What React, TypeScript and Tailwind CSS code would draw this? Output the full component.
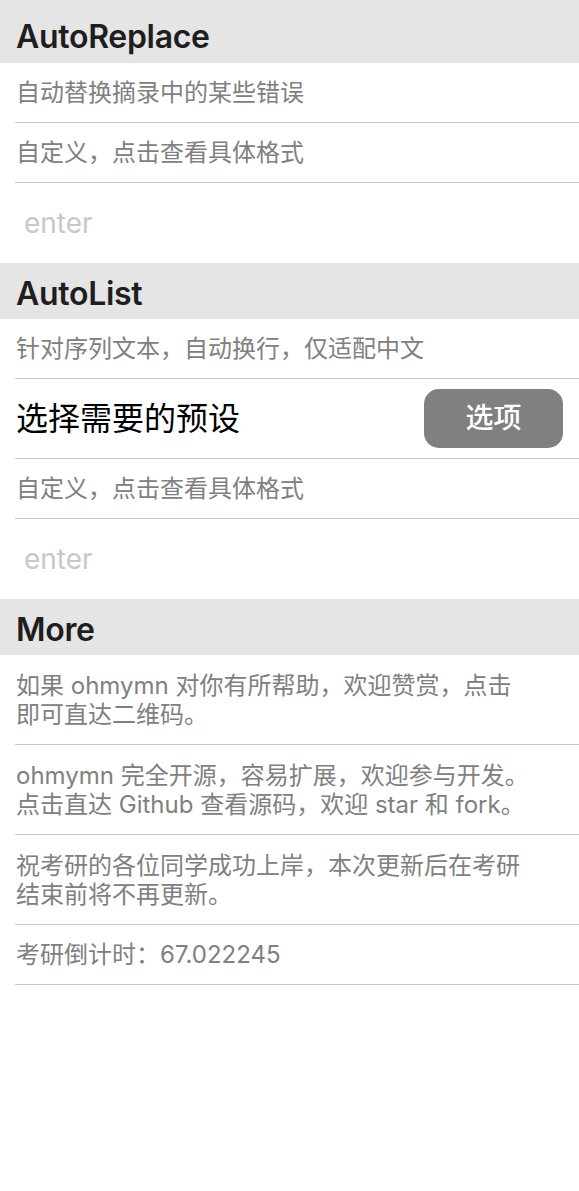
const font = "font-['Inter','Noto_Sans_CJK_SC',sans-serif]";

function Header({ title, first }: { title: string; first?: boolean }) {
  return (
    <div className={`bg-[#e5e5e5] pl-4 flex items-end ${first ? "h-[63px] pb-[10px]" : "h-[56px] pb-[9px]"}`}>
      <span className="text-[32px] font-semibold text-[#1e1e1e] leading-none tracking-[-0.3px]">{title}</span>
    </div>
  );
}

function TextRow({ children, tall }: { children: React.ReactNode; tall?: boolean }) {
  return (
    <div className="pl-[15px]">
      <div
        className={`border-b border-[#c8c8c8] pl-px pr-4 flex items-center text-[24px] leading-[29px] text-[#808080] ${tall ? "h-[90px]" : "h-[60px]"}`}
      >
        <p>{children}</p>
      </div>
    </div>
  );
}

function EnterRow() {
  return (
    <div className="h-[80px] flex items-center pl-6">
      <input
        placeholder="enter"
        className="w-full text-[28px] outline-none placeholder:text-[#c7c7cc] bg-transparent"
      />
    </div>
  );
}

export default function App() {
  return (
    <div className={`w-[579px] h-[1191px] bg-white ${font}`}>
      <Header title="AutoReplace" first />
      <TextRow>自动替换摘录中的某些错误</TextRow>
      <TextRow>自定义，点击查看具体格式</TextRow>
      <EnterRow />

      <Header title="AutoList" />
      <div className="pl-[15px]">
        <div className="border-b border-[#c8c8c8] h-[60px] flex items-center pl-px text-[24px] text-[#808080]">
          针对序列文本，自动换行，仅适配中文
        </div>
      </div>
      <div className="pl-[15px]">
        <div className="border-b border-[#c8c8c8] h-[80px] flex items-center justify-between pl-px pr-4">
          <span className="text-[32px] text-black">选择需要的预设</span>
          <button className="w-[139px] h-[59px] rounded-[15px] bg-[#808080] text-white text-[28px] font-medium mb-px">
            选项
          </button>
        </div>
      </div>
      <TextRow>自定义，点击查看具体格式</TextRow>
      <EnterRow />

      <Header title="More" />
      <TextRow tall>
        如果 ohmymn 对你有所帮助，欢迎赞赏，点击
        <br />
        即可直达二维码。
      </TextRow>
      <TextRow tall>
        ohmymn 完全开源，容易扩展，欢迎参与开发。
        <br />
        点击直达 Github 查看源码，欢迎 star 和 fork。
      </TextRow>
      <TextRow tall>
        祝考研的各位同学成功上岸，本次更新后在考研
        <br />
        结束前将不再更新。
      </TextRow>
      <TextRow>考研倒计时：67.022245</TextRow>
    </div>
  );
}
